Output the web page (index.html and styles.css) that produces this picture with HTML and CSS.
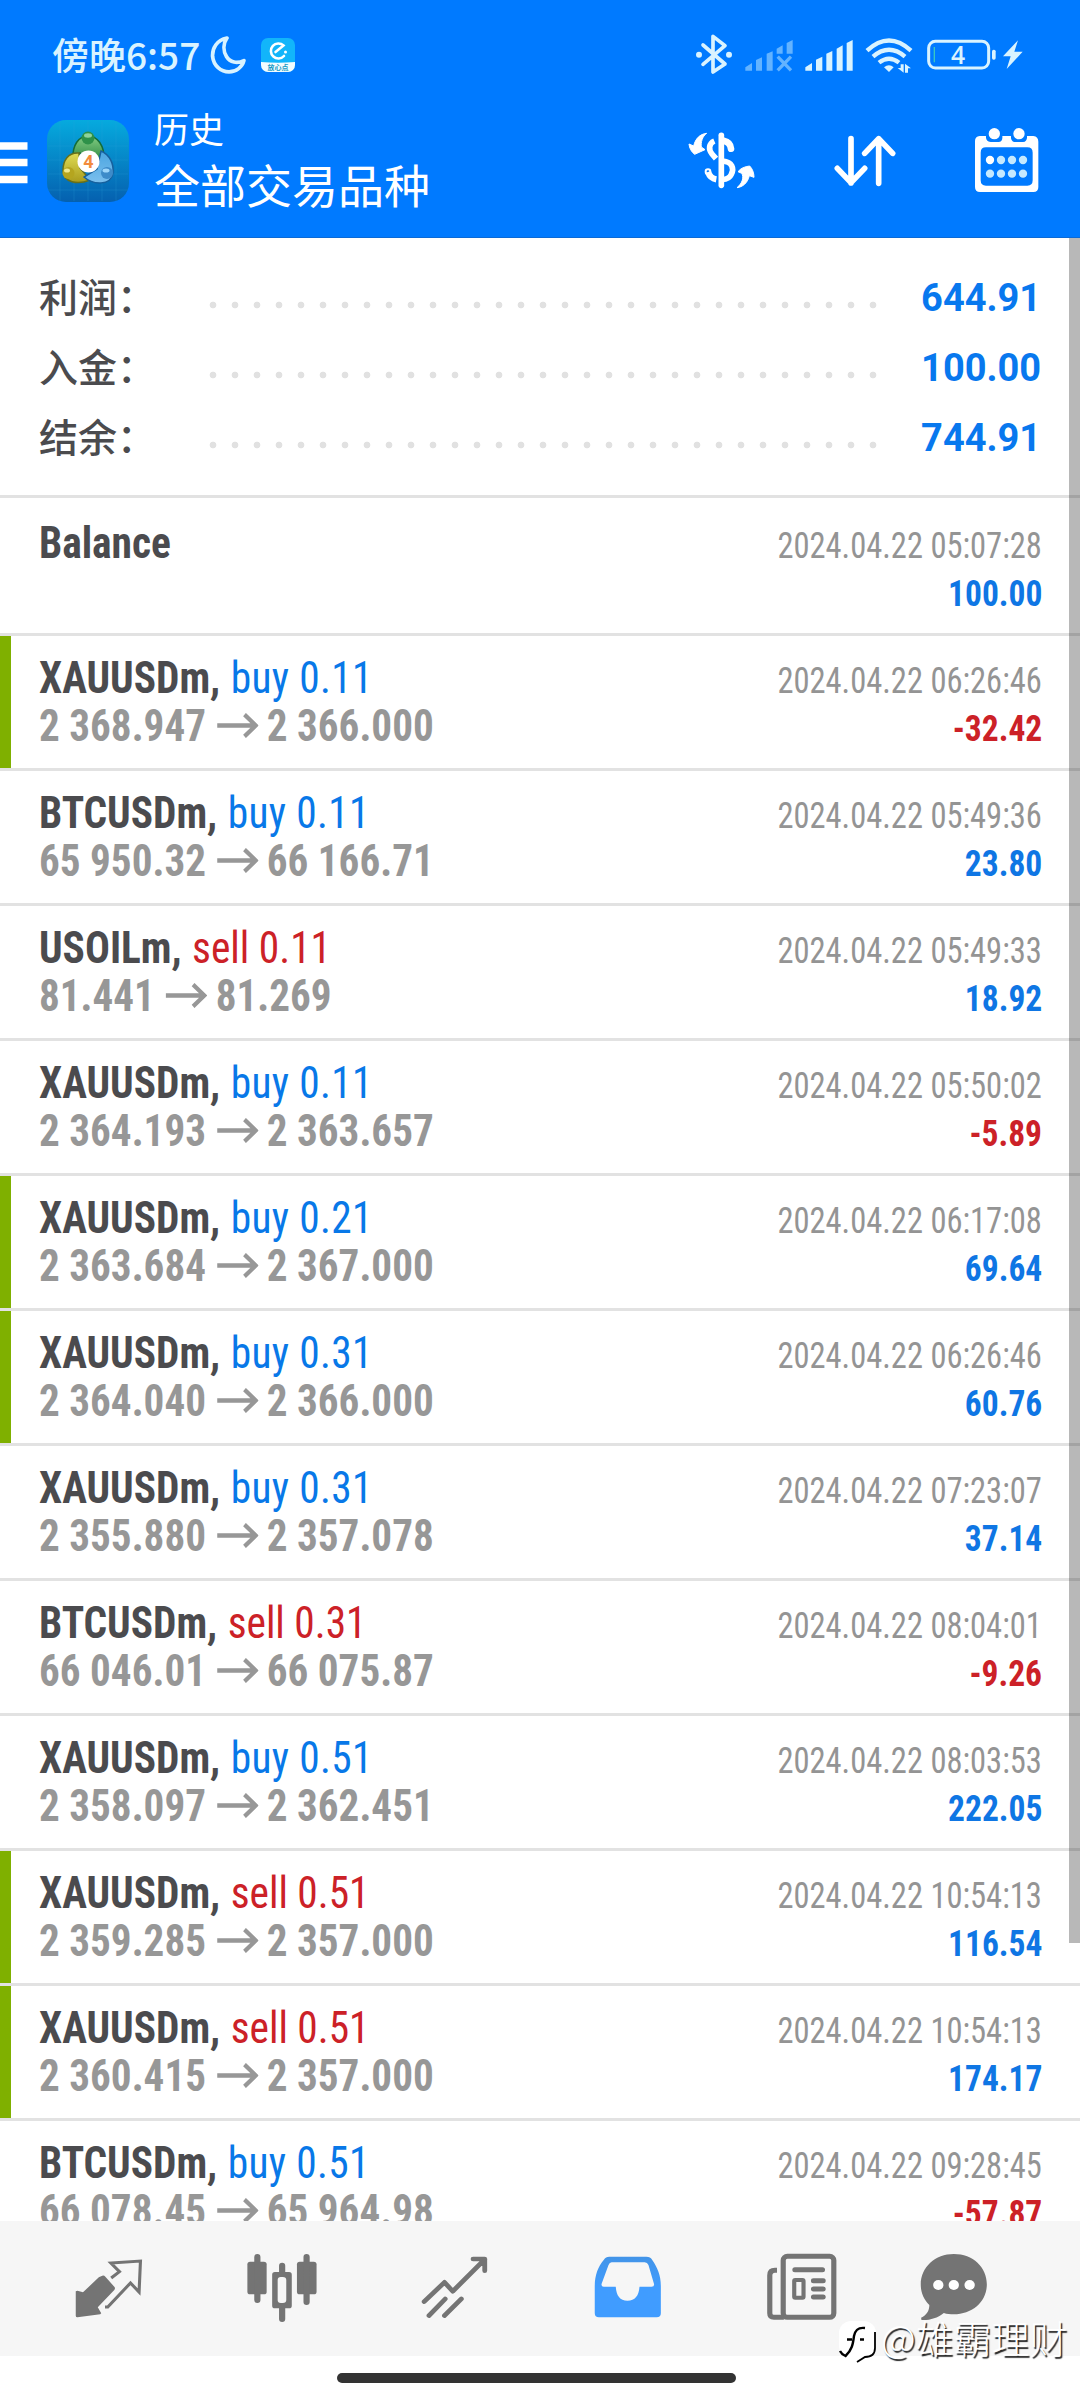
FILE: index.html
```html
<!DOCTYPE html>
<html lang="zh-CN">
<head>
<meta charset="utf-8">
<title>历史</title>
<link rel="stylesheet" href="styles.css">
</head>
<body>
<svg class="defs" width="0" height="0">
  <symbol id="arrow" viewBox="0 0 42 24"><path d="M0 12H39M28 1.500L39.500 12L28 22.500" fill="none" stroke="currentColor" stroke-width="4.200"/></symbol>
</svg>
<div class="screen">
  <header class="header">
    <div class="status">
      <span class="clock">傍晚6:57</span>
      <svg class="moon" width="36" height="38" viewBox="0 0 34 37"><path d="M16 2C6 4 1.500 12 2 20C3 29 10 35 18 35C25 35 31 30 32.500 24C26 27 19 26 15.500 20C12 14 12.500 7 16 2Z" fill="none" stroke="#d9f3ff" stroke-width="3.600" stroke-linejoin="round"/></svg>
      <svg class="eleme" width="34" height="34" viewBox="0 0 34 34">
        <clipPath id="ec"><rect width="34" height="34" rx="7"/></clipPath>
        <g clip-path="url(#ec)"><rect width="34" height="34" fill="#12b5fa"/><path d="M0 24Q17 25.500 34 24V34H0Z" fill="#f2fcff"/></g>
        <path d="M23 18A7.500 7.500 0 1 1 22.500 7.500L14.500 14" fill="none" stroke="#fff" stroke-width="2.600" stroke-linecap="round"/><circle cx="24.500" cy="14" r="1.500" fill="#fff"/>
        <text x="17" y="32" text-anchor="middle" class="eleme-text">放心点</text>
      </svg>
      <svg class="indicators" width="328" height="42" viewBox="105 100 984 126">
        <g fill="none" stroke="#d9f3ff" stroke-width="11" stroke-linejoin="round" stroke-linecap="round"><path d="M129 136L195 193L159 217V110L195 138L129 194"/></g>
        <g fill="#d9f3ff"><circle cx="117" cy="165" r="9"/><circle cx="207" cy="165" r="9"/></g>
        <g fill="#63b3ff"><path d="M256 213V203L276 190V213ZM288 213V181L306 173V213ZM320 213V162L338 155V213ZM350 162V147L368 137V162ZM380 162V130L398 121V162Z"/><path d="M353 171L393 212M393 171L353 212" stroke="#63b3ff" stroke-width="10"/></g>
        <path fill="#d9f3ff" d="M436 213V203L456 190V213ZM468 213V180L487 171V213ZM499 213V162L517 154V213ZM530 213V147L548 137V213ZM560 213V130L578 121V213Z"/>
        <g fill="none" stroke="#d9f3ff" stroke-width="13"><path d="M621 153Q687 92 753 153M639 171Q687 130 735 171M657 189Q687 165 717 189"/></g>
        <path fill="#d9f3ff" d="M672 203Q687 190 701 203L687 217ZM722 194H731V219L713 205H722ZM735 219V192L753 206H744V219Z"/>
        <rect x="806" y="125" width="180" height="80" rx="20" fill="none" stroke="#d9f3ff" stroke-width="9"/>
        <rect x="996" y="150" width="11" height="30" rx="5" fill="#d9f3ff"/><path d="M823 142V188" stroke="#39c7c0" stroke-width="4"/>
        <text x="894" y="192" text-anchor="middle" class="battery">4</text>
        <path fill="#d9f3ff" d="M1074 122L1029 170H1052L1040 208L1088 156H1063Z"/>
      </svg>
    </div>
    <div class="appbar">
      <svg class="menu" width="28" height="42" viewBox="0 0 28 42"><path d="M0 4H27.500M0 20.500H27.500M0 37.500H27.500" stroke="#fff" stroke-width="7.300"/></svg>
      <svg class="logo" width="84" height="84" viewBox="0 0 84 84">
        <defs>
          <linearGradient id="bg" x1="0" y1="0" x2="0" y2="1"><stop offset="0" stop-color="#06aade"/><stop offset="1" stop-color="#0560af"/></linearGradient>
          <linearGradient id="gr" x1="0" y1="0" x2="0" y2="1"><stop offset="0" stop-color="#83cd83"/><stop offset="1" stop-color="#25823c"/></linearGradient>
          <linearGradient id="ye" x1="0" y1="0" x2="0" y2="1"><stop offset="0" stop-color="#e0dc55"/><stop offset="1" stop-color="#a99b1c"/></linearGradient>
          <linearGradient id="bl" x1="0" y1="0" x2="0" y2="1"><stop offset="0" stop-color="#4ba5e0"/><stop offset="1" stop-color="#7abfee"/></linearGradient>
        </defs>
        <rect x="1" y="1" width="82" height="82" rx="19" fill="url(#bg)"/>
        <path d="M14 2V82M28 2V82M42 2V82M56 2V82M70 2V82M2 27H82M2 41H82M2 55H82M2 71H82" stroke="#32a8df" stroke-opacity=".22"/>
        <path d="M27 40C26 26 33 17 42 17C51 17 59 26 58 42L49 44L34 34Z" fill="url(#gr)" stroke="#146c38" stroke-width="1.500"/>
        <path d="M33 34C22 33 17 42 17 51C17 64 32 66 44 61L34 49Z" fill="url(#ye)" stroke="#68701a" stroke-width="1.500"/>
        <path d="M55 32C64 36 68 45 67 54C65 67 47 66 38 58L51 50Z" fill="url(#bl)" stroke="#17609d" stroke-width="1.500"/>
        <ellipse cx="42" cy="19" rx="6.500" ry="6.500" fill="#2e9149"/><ellipse cx="42" cy="16.500" rx="4" ry="2.200" fill="#8ed39b"/>
        <circle cx="22.500" cy="54" r="6" fill="#b5a51f"/><ellipse cx="21" cy="51.500" rx="3" ry="2" fill="#efe990"/>
        <circle cx="61" cy="54" r="6" fill="#3d8bc9"/><ellipse cx="60" cy="51.500" rx="3.500" ry="2" fill="#9ed6fa"/>
        <circle cx="42.500" cy="42.500" r="11" fill="#fff"/>
        <text x="42.500" y="49" text-anchor="middle" class="logo-text">4</text>
      </svg>
      <div class="titles"><div class="title">历史</div><div class="subtitle">全部交易品种</div></div>
      <svg class="i-dollar" width="68" height="58" viewBox="86 395 204 174">
        <g fill="none" stroke="#fff" stroke-linecap="round" stroke-linejoin="round">
          <path d="M186 408V558" stroke-width="17"/>
          <path d="M165 425C148 432 147 451 158 464L170 478" stroke-width="17" stroke-linecap="butt"/>
          <path d="M193 424C207 427 214 435 215 448" stroke-width="20"/>
          <path d="M190 485C219 488 225 507 216 525C210 538 202 540 190 540" stroke-width="17" stroke-linecap="butt"/>
          <path d="M146 518C151 532 158 538 171 540" stroke-width="19" stroke-linecap="butt"/><circle cx="146" cy="517" r="3" stroke-width="14"/>
        </g>
        <path fill="#fff" stroke="#fff" stroke-width="3" stroke-linejoin="round" d="M142 402C129 411 124 429 126 443L137 451L106 465C96 458 90 446 89 434L103 440C108 418 122 404 142 402ZM233 565C250 552 254 532 247 522L236 517C245 506 256 502 271 500C279 508 284 520 284 534L270 529C265 551 250 563 233 565Z"/>
      </svg>
      <svg class="i-sort" width="62" height="52" viewBox="522 405 186 156"><path d="M573 416V549M532 505L573 548L614 505M656 550V417M614 460L656 416L698 460" fill="none" stroke="#fff" stroke-width="17" stroke-linecap="round" stroke-linejoin="round"/></svg>
      <svg class="i-cal" width="66" height="66" viewBox="942 380 198 198">
        <path fill="#fff" fill-rule="evenodd" d="M959 407H978C977 417 982 425 992 425H1015C1025 425 1028 417 1027 407H1053C1052 417 1056 425 1066 425H1089C1098 425 1102 417 1101 407H1120Q1135 409 1135 424V560Q1135 575 1120 575H960Q945 575 945 560V422Q945 409 959 407ZM978 441Q962 441 962 457V540Q962 556 978 556H1102Q1118 556 1118 540V457Q1118 441 1102 441Z"/>
        <g fill="#fff"><circle cx="1003" cy="400" r="17"/><circle cx="1077" cy="400" r="17"/><circle cx="990" cy="479" r="12.500"/></g>
        <g fill="#c5e9ff"><circle cx="1023" cy="479" r="12.500"/><circle cx="1056" cy="479" r="12.500"/><circle cx="1089" cy="479" r="12.500"/><circle cx="990" cy="520" r="12.500"/><circle cx="1023" cy="520" r="12.500"/><circle cx="1056" cy="520" r="12.500"/><circle cx="1089" cy="520" r="12.500"/></g>
      </svg>
    </div>
  </header>

  <main class="content">
    <section class="summary">
      <div class="sum"><span class="label">利润：</span><i class="dots"></i><b class="total">644.91</b></div>
      <div class="sum"><span class="label">入金：</span><i class="dots"></i><b class="total">100.00</b></div>
      <div class="sum"><span class="label">结余：</span><i class="dots"></i><b class="total">744.91</b></div>
    </section>
    <section class="deals">
      <article class="deal first"><div class="line"><div class="name"><b>Balance</b></div><time>2024.04.22 05:07:28</time></div><div class="line"><div class="price">&nbsp;</div><b class="profit">100.00</b></div></article>
      <article class="deal tp"><div class="line"><div class="name"><b>XAUUSDm,</b> <span class="buy">buy 0.11</span></div><time>2024.04.22 06:26:46</time></div><div class="line"><div class="price">2 368.947<svg class="to"><use href="#arrow"/></svg>2 366.000</div><b class="profit loss">-32.42</b></div></article>
      <article class="deal"><div class="line"><div class="name"><b>BTCUSDm,</b> <span class="buy">buy 0.11</span></div><time>2024.04.22 05:49:36</time></div><div class="line"><div class="price">65 950.32<svg class="to"><use href="#arrow"/></svg>66 166.71</div><b class="profit">23.80</b></div></article>
      <article class="deal"><div class="line"><div class="name"><b>USOILm,</b> <span class="sell">sell 0.11</span></div><time>2024.04.22 05:49:33</time></div><div class="line"><div class="price">81.441<svg class="to"><use href="#arrow"/></svg>81.269</div><b class="profit">18.92</b></div></article>
      <article class="deal"><div class="line"><div class="name"><b>XAUUSDm,</b> <span class="buy">buy 0.11</span></div><time>2024.04.22 05:50:02</time></div><div class="line"><div class="price">2 364.193<svg class="to"><use href="#arrow"/></svg>2 363.657</div><b class="profit loss">-5.89</b></div></article>
      <article class="deal tp"><div class="line"><div class="name"><b>XAUUSDm,</b> <span class="buy">buy 0.21</span></div><time>2024.04.22 06:17:08</time></div><div class="line"><div class="price">2 363.684<svg class="to"><use href="#arrow"/></svg>2 367.000</div><b class="profit">69.64</b></div></article>
      <article class="deal tp"><div class="line"><div class="name"><b>XAUUSDm,</b> <span class="buy">buy 0.31</span></div><time>2024.04.22 06:26:46</time></div><div class="line"><div class="price">2 364.040<svg class="to"><use href="#arrow"/></svg>2 366.000</div><b class="profit">60.76</b></div></article>
      <article class="deal"><div class="line"><div class="name"><b>XAUUSDm,</b> <span class="buy">buy 0.31</span></div><time>2024.04.22 07:23:07</time></div><div class="line"><div class="price">2 355.880<svg class="to"><use href="#arrow"/></svg>2 357.078</div><b class="profit">37.14</b></div></article>
      <article class="deal"><div class="line"><div class="name"><b>BTCUSDm,</b> <span class="sell">sell 0.31</span></div><time>2024.04.22 08:04:01</time></div><div class="line"><div class="price">66 046.01<svg class="to"><use href="#arrow"/></svg>66 075.87</div><b class="profit loss">-9.26</b></div></article>
      <article class="deal"><div class="line"><div class="name"><b>XAUUSDm,</b> <span class="buy">buy 0.51</span></div><time>2024.04.22 08:03:53</time></div><div class="line"><div class="price">2 358.097<svg class="to"><use href="#arrow"/></svg>2 362.451</div><b class="profit">222.05</b></div></article>
      <article class="deal tp"><div class="line"><div class="name"><b>XAUUSDm,</b> <span class="sell">sell 0.51</span></div><time>2024.04.22 10:54:13</time></div><div class="line"><div class="price">2 359.285<svg class="to"><use href="#arrow"/></svg>2 357.000</div><b class="profit">116.54</b></div></article>
      <article class="deal tp"><div class="line"><div class="name"><b>XAUUSDm,</b> <span class="sell">sell 0.51</span></div><time>2024.04.22 10:54:13</time></div><div class="line"><div class="price">2 360.415<svg class="to"><use href="#arrow"/></svg>2 357.000</div><b class="profit">174.17</b></div></article>
      <article class="deal"><div class="line"><div class="name"><b>BTCUSDm,</b> <span class="buy">buy 0.51</span></div><time>2024.04.22 09:28:45</time></div><div class="line"><div class="price">66 078.45<svg class="to"><use href="#arrow"/></svg>65 964.98</div><b class="profit loss">-57.87</b></div></article>
    </section>
    <div class="scrollbar"></div>
  </main>

  <nav class="nav">
    <svg viewBox="211 456 208 214" preserveAspectRatio="none"><g fill="#747474"><path d="M296 527Q301 525 305 530L331 560Q335 565 331 570L283 622L293 640L290 643L224 652Q219 652 219 647V574L224 572L240 577L286 532Z"/></g><path d="M322 534L346 515L321 489L407 483L403 576L378 549L312 621H304" fill="none" stroke="#747474" stroke-width="9"/></svg>
    <svg viewBox="712 456 208 214" preserveAspectRatio="none"><g fill="#747474"><rect x="716" y="485" width="56" height="98" rx="8"/><rect x="860" y="485" width="57" height="98" rx="8"/><path fill-rule="evenodd" d="M796 516H837Q845 516 845 524V617Q845 625 837 625H796Q788 625 788 617V524Q788 516 796 516ZM813 531Q804 531 804 540V600Q804 609 813 609H819Q829 609 829 600V540Q829 531 819 531Z"/></g><g stroke="#747474" stroke-width="18" stroke-linecap="round"><path d="M745 471V600M888 471V606M817 497V518M817 625V657"/></g></svg>
    <svg viewBox="1215 456 208 214" preserveAspectRatio="none"><g fill="none" stroke="#747474" stroke-width="14" stroke-linecap="round" stroke-linejoin="round"><path d="M1230 605L1289 547L1313 574L1406 478M1372 477H1406V512M1244 647L1291 597M1289 647L1338 597"/></g></svg>
    <svg viewBox="150 456 208 214" preserveAspectRatio="none"><defs><linearGradient id="inb" x1="0" y1="0" x2="0" y2="1"><stop offset="0" stop-color="#4294e8"/><stop offset=".5" stop-color="#409cff"/></linearGradient></defs><path fill="url(#inb)" fill-rule="evenodd" d="M200 470H308Q320 470 325 480C340 503 350 525 350 558V640Q350 652 338 652H170Q158 652 158 640V558C158 525 168 500 184 480Q190 470 200 470ZM207 487Q201 487 198 495L178 551Q176 560 184 560H219C221 587 231 602 253 602C275 602 286 587 288 560H323Q332 560 330 551L314 495Q311 487 303 487Z"/></svg>
    <svg viewBox="654 456 208 214" preserveAspectRatio="none"><g fill="none" stroke="#747474" stroke-width="15"><rect x="704" y="469" width="147" height="183" rx="12"/><path d="M686 511H680Q665 511 665 526V640Q665 652 677 652H706"/><path d="M738 509H818M792 542H820M792 567H820M792 591H820" stroke-linecap="round"/><rect x="736" y="540" width="27" height="53" rx="3" stroke-width="12"/></g></svg>
    <svg viewBox="1095 456 208 214" preserveAspectRatio="none"><path fill="#747474" d="M1199 462C1255 462 1295 502 1295 553C1295 606 1252 643 1199 643C1189 643 1179 642 1170 639C1150 655 1130 661 1105 660L1104 653C1120 646 1128 632 1128 615C1111 598 1103 577 1103 553C1103 502 1145 462 1199 462Z"/><g fill="#fff"><circle cx="1154" cy="555" r="15"/><circle cx="1199" cy="555" r="15"/><circle cx="1245" cy="555" r="15"/></g></svg>
  </nav>
  <footer class="home"><div class="pill"></div></footer>
  <div class="watermark">
    <svg width="44" height="48" viewBox="0 0 44 48"><rect x="3" y="2" width="37" height="37" rx="12" fill="#fff"/><path d="M29 9C21 8 19 12 18 17C17 25 16 31 9.500 37C7 36 5 34 4 32M11 20.500H16M24 20.500H28" fill="none" stroke="#000" stroke-width="2.400"/><path d="M39 13V29C39 36 34 38 29 38L21 43" fill="none" stroke="#000" stroke-width="1.800"/></svg>
    <span>@雄霸理财</span>
  </div>
</div>
</body>
</html>
```
FILE: styles.css
```css
* { box-sizing: border-box; }
body { margin: 0; background: #fff; font-family: Roboto, "Noto Sans CJK SC", sans-serif; }
svg { display: block; flex: none; }
.defs { position: absolute; }
.screen { position: relative; width: 1080px; height: 2400px; display: flex; flex-direction: column; overflow: hidden; }

.header { height: 238px; flex: none; background: #007aff; border-bottom: 1px solid #0b6ad6; color: #fff; }
.status { height: 110px; display: flex; align-items: flex-start; padding: 35px 57px 0 52px; }
.clock { font-size: 37px; line-height: 38px; width: 148px; white-space: nowrap; color: #d9f3ff; font-family: "Noto Sans CJK SC", sans-serif; font-weight: 500; }
.moon { margin: 1px 0 0 10px; }
.eleme { margin: 3px 0 0 15px; }
.eleme-text { font: 700 7px "Noto Sans CJK SC", sans-serif; fill: #1799c4; }
.indicators { margin-left: auto; margin-top: -2px; }
.battery { font: 600 74px "Open Sans", sans-serif; fill: #d9f3ff; }
.appbar { display: flex; align-items: flex-start; }
.menu { margin-top: 32px; }
.logo { margin: 9px 0 0 18px; }
.logo-text { font: 700 18px Roboto, sans-serif; fill: #f28b3c; }
.titles { margin-left: 24px; width: 534px; font-family: "Noto Sans CJK SC", sans-serif; font-weight: 400; }
.title { font-size: 35px; line-height: 36px; }
.subtitle { font-size: 46px; line-height: 60px; margin-top: 7px; }
.i-dollar { margin-top: 21px; }
.i-sort { margin: 25px 0 0 78px; }
.i-cal { margin: 17px 0 0 78px; }

.content { position: relative; height: 1983px; flex: none; overflow: hidden; background: #fff; }
.summary { height: 260px; padding: 25px 39px 0; border-bottom: 3px solid #e2e2e2; }
.sum { height: 70px; display: flex; align-items: center; }
.label { width: 165px; margin-top: -7px; font: 500 39px/70px "Noto Sans CJK SC", sans-serif; color: #4b4b4e; }
.dots { width: 682px; height: 8px; margin-top: 13px; background: radial-gradient(circle at 11px 4px, #e1e1e1 3px, transparent 3.700px) -2px 0 / 22px 8px repeat-x; }
.total { margin-left: auto; font-size: 39px; font-weight: 700; color: #0878ee; transform: scaleX(.975); transform-origin: 100% 0; }

.deal { height: 135px; padding: 18px 38px 0 39px; border-bottom: 3px solid #e2e2e2; position: relative; }
.deal.first { height: 138px; padding-top: 21px; }
.deal.tp::before { content: ""; position: absolute; left: 0; top: 0; width: 11px; height: 132px; background: #7fb000; }
.line { height: 48px; display: flex; justify-content: space-between; align-items: baseline; line-height: 48px; font-family: "Roboto Condensed", Roboto, sans-serif; white-space: nowrap; }
.name { font-size: 44px; color: #4b4b4e; transform: scaleX(.94); transform-origin: 0 0; }
.price { font-size: 44px; font-weight: 700; color: #979797; transform: scaleX(.935); transform-origin: 0 0; }
.to { display: inline-block; width: 45px; height: 25px; margin: 0 9px 0 11px; vertical-align: 3px; }
.deal time { font-size: 36px; font-weight: 400; color: #949494; transform: scaleX(.903); transform-origin: 100% 0; }
.profit { font-size: 36px; color: #0f76e4; transform: scaleX(.93); transform-origin: 100% 0; }
.buy { color: #0878e8; margin-left: 1px; letter-spacing: .4px; }
.sell { margin-left: 1px; }
.sell, .profit.loss { color: #cc2127; }
.scrollbar { position: absolute; right: 0; top: 0; width: 11px; height: 1705px; background: rgba(0, 0, 0, .28); }

.nav { height: 135px; flex: none; background: #f6f6f6; display: flex; align-items: flex-start; padding: 31px 0 0 72.500px; gap: 101.700px; }
.nav svg { width: 71.600px; height: 71.300px; }
.nav svg:last-child { margin-left: -21px; }
.home { flex: 1; background: #fff; padding: 17px 0 0 337px; }
.pill { width: 399px; height: 10px; border-radius: 5px; background: #333; }
.watermark { position: absolute; left: 836px; top: 2319px; display: flex; align-items: flex-start; color: #fff; }
.watermark span { font: 300 38px/42px "Noto Sans CJK SC", sans-serif; text-shadow: 1.500px 1.500px 1px #222; margin: -3px 0 0 1px; white-space: nowrap; }
```
